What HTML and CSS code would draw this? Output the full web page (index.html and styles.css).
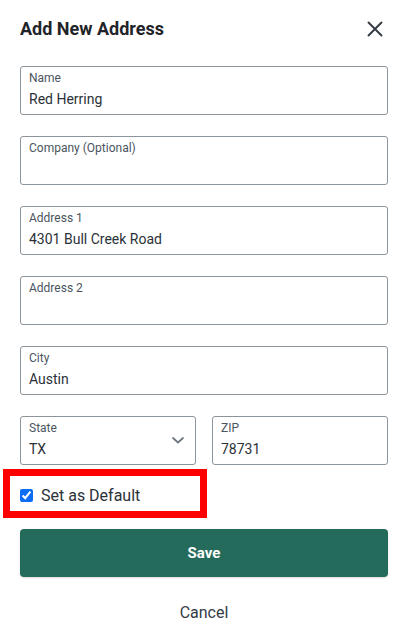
FILE: index.html
```html
<!DOCTYPE html>
<html>
<head>
<meta charset="utf-8">
<link rel="stylesheet" href="styles.css">
</head>
<body>
<div class="modal">
  <div class="header">
    <h1 class="title">Add New Address</h1>
    <button class="close" aria-label="Close">
      <svg width="16" height="16" viewBox="0 0 16 16"><path d="M1.5 1.5 L14.5 14.5 M14.5 1.5 L1.5 14.5" stroke="#333a42" stroke-width="1.9" stroke-linecap="round" fill="none"/></svg>
    </button>
  </div>
  <div class="fields">
    <div class="field"><div class="label">Name</div><div class="value">Red Herring</div></div>
    <div class="field"><div class="label">Company (Optional)</div><div class="value"></div></div>
    <div class="field"><div class="label">Address 1</div><div class="value">4301 Bull Creek Road</div></div>
    <div class="field"><div class="label">Address 2</div><div class="value"></div></div>
    <div class="field"><div class="label">City</div><div class="value">Austin</div></div>
    <div class="pair">
      <div class="field select">
        <div class="label">State</div><div class="value">TX</div>
        <svg class="chev" width="12" height="7" viewBox="0 0 12 7"><path d="M1 1 L6 5.5 L11 1" stroke="#6c757d" stroke-width="1.7" fill="none" stroke-linecap="round" stroke-linejoin="round"/></svg>
      </div>
      <div class="field"><div class="label">ZIP</div><div class="value">78731</div></div>
    </div>
  </div>
  <div class="default-row">
    <input type="checkbox" class="check" checked>
    <span class="default-text">Set as Default</span>
    <div class="highlight"></div>
  </div>
  <button class="save">Save</button>
  <div class="cancel">Cancel</div>
</div>
</body>
</html>
```
FILE: styles.css
```css
* { box-sizing: border-box; }
html, body { margin: 0; padding: 0; background: #fff; }
body { font-family: Roboto, "Liberation Sans", Arial, sans-serif; color: #2b3138; }
.modal { padding: 17px 20px 0 20px; }
.header { display: flex; justify-content: space-between; align-items: flex-start; height: 49px; }
.title { margin: 0; font-size: 18px; line-height: 24px; font-weight: 700; color: #1f2429; }
.close { border: 0; background: none; padding: 0; margin: 4px 5px 0 0; width: 16px; height: 16px; display: block; }
.close svg { display: block; }
.fields { display: flex; flex-direction: column; gap: 21px; }
.field { position: relative; height: 49px; border: 1px solid #8c949c; border-radius: 3px; padding: 4px 8px 0 8px; }
.label { font-size: 12px; line-height: 14px; color: #4a5560; }
.value { font-size: 14px; line-height: 20px; margin-top: 4px; color: #2b3138; min-height: 20px; }
.pair { display: grid; grid-template-columns: 1fr 1fr; gap: 16px; }
.chev { position: absolute; right: 11px; top: 20px; }
.default-row { position: relative; display: flex; align-items: center; height: 30px; margin-top: 15px; }
.check { margin: 0; width: 13px; height: 13px; accent-color: #0b6cf5; }
.default-text { margin-left: 8px; font-size: 16px; color: #2b3138; }
.highlight { position: absolute; left: -17px; top: -11px; width: 204px; height: 49px; border: 7px solid #fe0000; }
.save { display: block; width: 100%; height: 48px; margin-top: 19px; border: 0; border-radius: 4px; background: #256b5c; color: #fff; font-family: Roboto, "Liberation Sans", Arial, sans-serif; font-size: 15px; font-weight: 700; box-shadow: 0 1px 2px rgba(0,0,0,0.15); }
.cancel { text-align: center; margin-top: 26px; font-size: 16px; line-height: 20px; color: #333b44; }
```
